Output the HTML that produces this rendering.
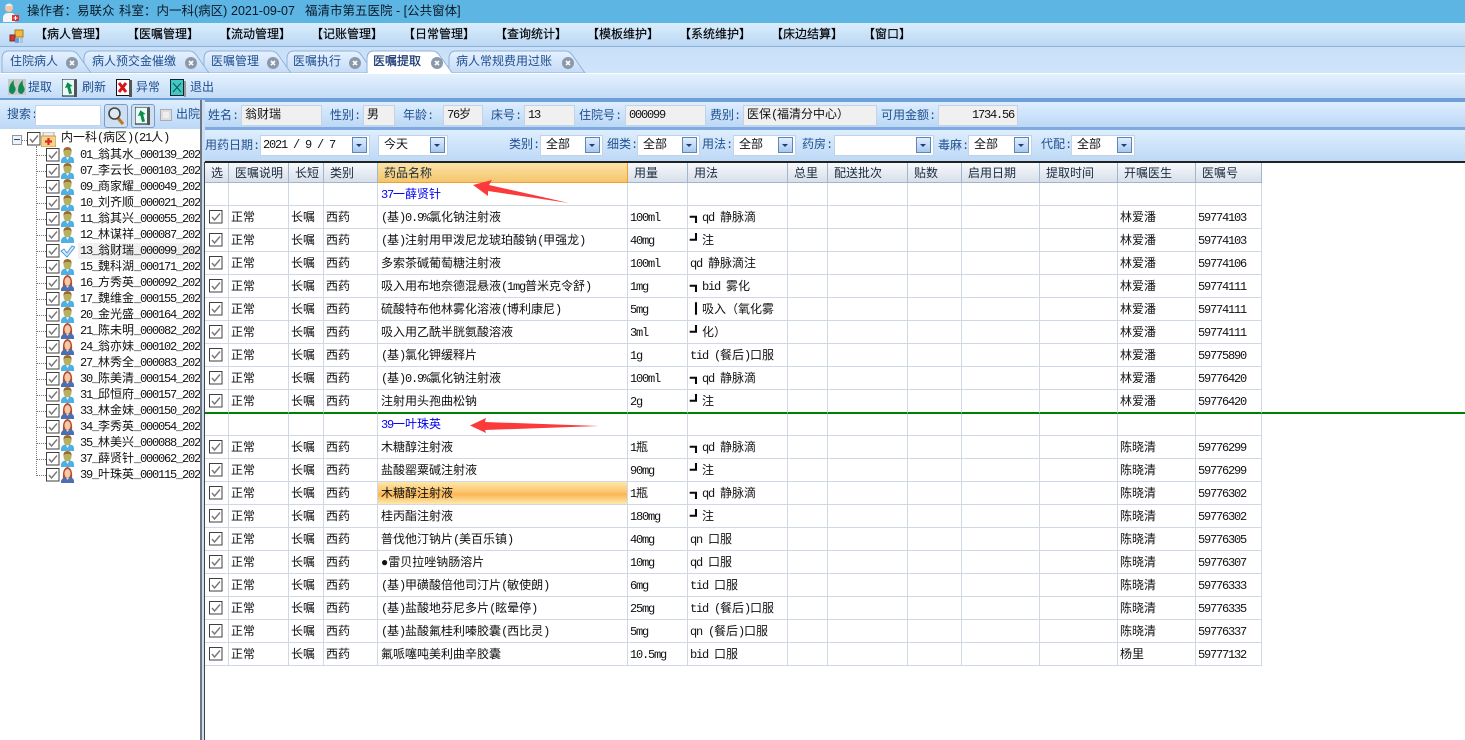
<!DOCTYPE html>
<html lang="zh"><head><meta charset="utf-8"><title>医嘱提取</title>
<style>
*{box-sizing:border-box}
html,body{margin:0;padding:0;width:1465px;height:740px;overflow:hidden;background:#fff}
body{position:relative;font:12px/14px "Liberation Mono","WenQuanYi Zen Hei","Noto Sans CJK SC",monospace;color:#111}
b{font-weight:normal;font-size:12px;letter-spacing:-1.2px;line-height:0}
em{font-style:normal;-webkit-text-stroke:.6px #000;line-height:0}
.a{position:absolute;white-space:nowrap}
svg{display:block}
#title{left:0;top:0;width:1465px;height:23px;background:#5db5e3}
#title span{position:absolute;top:0;font:12.5px/23px "Liberation Sans","WenQuanYi Zen Hei",sans-serif;color:#0a1a28;white-space:nowrap}
#menu{left:0;top:23px;width:1465px;height:24px;background:linear-gradient(#d9edfd,#bcd8f4);border-bottom:1px solid #8fb2da}
#menu span{position:absolute;top:5px;font-size:12px;line-height:14px;color:#000;-webkit-text-stroke:.15px #000}
#tabs{left:0;top:47px;width:1465px;height:26px;background:linear-gradient(#c8e0f8,#cfe4fa)}
#tbar{left:0;top:73px;width:1465px;height:27px;background:linear-gradient(#e4f1fe,#c3dcf7);border-top:1px solid #fff;border-bottom:2px solid #6d9fd6}
.tb{font-size:12px;color:#1f4e8f;top:81px}
.p{left:0;background:linear-gradient(#deeefe,#bcd8f6)}
.lab{color:#20508f;font-size:12px}
.inp{background:#f0f0f0;border:1px solid #c3d3e6;height:21px;font-size:12px;padding:2px 0 0 3px;color:#111}
.sel{background:#fff;border:1px solid #c3d3e6;height:21px;padding:2px 0 0 5px;color:#111}
.sel i{position:absolute;right:2px;top:1px;width:15px;height:16px;background:linear-gradient(#dfeeff,#a8c8ee);border:1px solid #5c86b9}
.sel i:after{content:"";position:absolute;left:3px;top:6px;border-style:solid;border-color:#1d3f78 transparent transparent;border-width:3px 3.5px 0;width:0;height:0}
table{position:absolute;left:205px;top:163px;border-collapse:separate;border-spacing:0;table-layout:fixed;width:1057px}
th,td{padding:0;border-right:1px solid #d0d7e5;border-bottom:1px solid #d0d7e5;overflow:hidden;white-space:nowrap;text-align:left;font-weight:normal;font-size:12px;vertical-align:top}
th{height:20px;background:linear-gradient(#f7f9fc,#d8dfea);color:#1a2a3c;padding:3px 0 0 6px;border-right:1px solid #9eb6ce;border-bottom:1px solid #9eb6ce;line-height:16px}
th.on{background:linear-gradient(#fbe3a6,#f5c56d);border-bottom:1px solid #ef9f32;border-right:1px solid #ef9f32}
td{height:23px;padding:2px 0 0 2px;line-height:20px}
td.n{padding-left:3px}
td.c{padding:4px 0 0 4px;line-height:0}
tr.g td{color:#0000f0}
tr.gl td{border-bottom:2px solid #008000;height:24px}
tr.g2 td{height:22px;padding-top:1px}
td.hl{background:linear-gradient(#fde7a9 0,#fcc56e 45%,#fbb554 55%,#fde9ae 100%)}
.t{position:absolute;left:80px;font-size:12px;line-height:14px;color:#111;width:120px;overflow:hidden;white-space:nowrap}
.tc{position:absolute;left:46px;width:14px;height:14px}
.ti{position:absolute;left:60px;width:15px;height:16px}
.h{position:absolute;left:36px;width:10px;border-top:1px dotted #777}
</style></head><body>
<svg width="0" height="0" style="position:absolute">
<symbol id="ck" viewBox="0 0 14 14"><rect x=".5" y=".5" width="12.500" height="12.500" fill="#fff" stroke="#3f3f3f"/><path d="M3 7l2.500 3L11 3.500" fill="none" stroke="#777" stroke-width="1.400"/></symbol>
<symbol id="m" viewBox="0 0 15 16"><path d="M1 16v-3q1-3 4-3.500h5q4 .5 4 3.500v3z" fill="#4fb0e6"/><path d="M6 10h3l-1.500 3z" fill="#fff"/><ellipse cx="7.500" cy="5.500" rx="4" ry="5" fill="#b8b05c"/><path d="M3.500 5Q3 0 7.500 0T11.500 5L10 3H5z" fill="#9a6a30"/></symbol>
<symbol id="f" viewBox="0 0 15 16"><path d="M3 12Q2 1 7.500 0 13 1 12 12z" fill="#b2502e"/><path d="M1 16v-2q1-3 4-3.500h5q4 .5 4 3.500v2z" fill="#4a6fb4"/><ellipse cx="7.500" cy="6.500" rx="3" ry="4.500" fill="#f6c9a4"/><path d="M6 11h3l-1.500 2z" fill="#f6c9a4"/></symbol>
<symbol id="v" viewBox="0 0 15 16"><path d="M1 8l3-2 3 4L12 3l3 1-8 10z" fill="#d6ecfa" stroke="#4f9ad8"/></symbol>
<symbol id="rf" viewBox="0 0 16 18"><rect x="0" y="0" width="14" height="17" fill="#e8fbf8" stroke="#111"/><rect x="12" y="1" width="3" height="17" fill="#555"/><path d="M3 8l4-5 4 5H8.500v7H5.500V8z" transform="rotate(-15 7 9)" fill="#0d8a4c"/></symbol>
</svg>

<div id="title" class="a"><span style="left:27px">操作者：易联众</span><span style="left:119px">科室：内一科(病区)</span><span style="left:231px">2021-09-07</span><span style="left:305px">福清市第五医院 - [公共窗体]</span></div>
<svg class="a" style="left:2px;top:2px" width="18" height="20" viewBox="0 0 18 20"><path d="M1 20v-5q1-4 5-4h3q4 0 4 4v5z" fill="#f5f5f5"/><circle cx="7" cy="6" r="4" fill="#f3c6a8"/><path d="M3 4q4-5 8 0z" fill="#e8eef4"/><rect x="10" y="13" width="7" height="6" fill="#d33"/><path d="M13.500 14v4M11.500 16h4" stroke="#fff"/></svg>

<div id="menu" class="a">
<svg style="position:absolute;left:9px;top:6px" width="15" height="15" viewBox="0 0 15 15"><rect x="6" y="1" width="8" height="7" fill="#f4b93c" stroke="#a77a1e"/><rect x="1" y="6" width="5" height="6" fill="#d8352e" stroke="#7e2a20"/><rect x="6" y="9" width="4" height="5" fill="#6a9ed8"/><rect x="11" y="9" width="3" height="5" fill="#a9c4e4"/></svg>
<span style="left:35px">【病人管理】</span><span style="left:127px">【医嘱管理】</span><span style="left:219px">【流动管理】</span><span style="left:311px">【记账管理】</span><span style="left:403px">【日常管理】</span><span style="left:495px">【查询统计】</span><span style="left:587px">【模板维护】</span><span style="left:679px">【系统维护】</span><span style="left:771px">【床边结算】</span><span style="left:863px">【窗口】</span>
</div>

<div id="tabs" class="a"></div>
<svg class="a" style="left:0;top:50px" width="600" height="24" viewBox="0 0 600 24">
<defs><linearGradient id="tg" x1="0" y1="0" x2="0" y2="1"><stop offset="0" stop-color="#e6f2fe"/><stop offset="1" stop-color="#c4dcf7"/></linearGradient></defs>
<path d="M449 23V9q0-8 7-8h109q5 0 8 5l12 17z" fill="url(#tg)" stroke="#8fb2da"/>
<path d="M287 23V9q0-8 7-8h60q5 0 8 5l12 17z" fill="url(#tg)" stroke="#8fb2da"/>
<path d="M204 23V9q0-8 7-8h60q5 0 8 5l12 17z" fill="url(#tg)" stroke="#8fb2da"/>
<path d="M84 23V9q0-8 7-8h98q5 0 8 5l12 17z" fill="url(#tg)" stroke="#8fb2da"/>
<path d="M2 23V9q0-8 7-8h62q5 0 8 5l12 17z" fill="url(#tg)" stroke="#8fb2da"/>
<path d="M367 24V9q0-8 7-8h58q5 0 8 5l13 18z" fill="#fff" stroke="#8fb2da"/>
<g fill="#8a98aa"><circle cx="72" cy="13" r="6"/><circle cx="191" cy="13" r="6"/><circle cx="273" cy="13" r="6"/><circle cx="355" cy="13" r="6"/><circle cx="437" cy="13" r="6"/><circle cx="568" cy="13" r="6"/></g>
<path d="M70 11l4 4m0-4l-4 4M189 11l4 4m0-4l-4 4M271 11l4 4m0-4l-4 4M353 11l4 4m0-4l-4 4M435 11l4 4m0-4l-4 4M566 11l4 4m0-4l-4 4" stroke="#fff" stroke-width="1.600"/>
</svg>
<div class="a" style="left:10px;top:55px;color:#1f4e8f">住院病人</div>
<div class="a" style="left:92px;top:55px;color:#1f4e8f">病人预交金催缴</div>
<div class="a" style="left:211px;top:55px;color:#1f4e8f">医嘱管理</div>
<div class="a" style="left:293px;top:55px;color:#1f4e8f">医嘱执行</div>
<div class="a" style="left:373px;top:55px;color:#1f3f78;-webkit-text-stroke:.3px #1f3f78">医嘱提取</div>
<div class="a" style="left:456px;top:55px;color:#1f4e8f">病人常规费用过账</div>

<div id="tbar" class="a"></div>
<svg class="a" style="left:8px;top:79px" width="18" height="16" viewBox="0 0 18 16"><rect width="18" height="16" fill="#c9c9c9"/><path d="M1 11q0-6 5-10-1 4 1 7t-2 7q-4 0-4-4zM10 11q0-6 5-10-1 4 1 7t-2 7q-4 0-4-4z" fill="#0f8a50"/></svg>
<div class="a tb" style="left:28px">提取</div>
<svg class="a" style="left:62px;top:79px" width="16" height="18"><use href="#rf"/></svg>
<div class="a tb" style="left:82px">刷新</div>
<svg class="a" style="left:116px;top:79px" width="16" height="18" viewBox="0 0 16 18"><rect x=".5" y=".5" width="13" height="16" fill="#fff" stroke="#111"/><rect x="13" y="1" width="3" height="17" fill="#555"/><path d="M3 4l7 9m0-9l-7 9" stroke="#d8141c" stroke-width="3"/></svg>
<div class="a tb" style="left:136px">异常</div>
<svg class="a" style="left:170px;top:79px" width="16" height="18" viewBox="0 0 16 18"><rect x=".5" y=".5" width="13" height="16" fill="#3fc9c0" stroke="#123"/><rect x="14" y="2" width="2" height="16" fill="#999"/><path d="M3 4l8 9m0-9l-8 9" stroke="#0d5560"/></svg>
<div class="a tb" style="left:190px">退出</div>

<!-- left panel -->
<div class="a p" style="top:100px;width:201px;height:29px"></div>
<div class="a lab" style="left:7px;top:108px">搜索<b>:</b></div>
<div class="a" style="left:35px;top:105px;width:66px;height:21px;background:#fff;border:1px solid #c3d3e6"></div>
<div class="a" style="left:104px;top:104px;width:24px;height:24px;border:1px solid #7c9cc4;border-radius:3px;background:#cfdff2"></div>
<svg class="a" style="left:107px;top:106px" width="18" height="19" viewBox="0 0 18 19"><path d="M10 11l6 7" stroke="#b57a25" stroke-width="3"/><circle cx="7.500" cy="7.500" r="5.500" fill="#dfe9f4" stroke="#444" stroke-width="1.600"/></svg>
<div class="a" style="left:131px;top:104px;width:24px;height:24px;border:1px solid #7c9cc4;border-radius:3px;background:#cfdff2"></div>
<svg class="a" style="left:135px;top:107px" width="16" height="18"><use href="#rf"/></svg>
<div class="a" style="left:160px;top:109px;width:12px;height:12px;background:#eee;border:1px solid #aab;box-shadow:inset 0 0 0 2px #ddd"></div>
<div class="a lab" style="left:176px;top:108px">出院</div>

<div class="a" style="left:200px;top:100px;width:2px;height:640px;background:#6f7680"></div>
<div class="a" style="left:202px;top:100px;width:3px;height:640px;background:#c9def6"></div>
<div class="a" style="left:204px;top:162px;width:1px;height:578px;background:#444"></div>

<!-- tree -->
<div class="a" style="left:36px;top:146px;height:330px;border-left:1px dotted #777"></div>
<div class="a" style="left:12px;top:135px;width:10px;height:10px;border:1px solid #8a98aa;background:#eef3f9"></div>
<div class="a" style="left:14px;top:139px;width:6px;height:1px;background:#345"></div>
<div class="h" style="left:22px;top:140px;width:5px"></div>
<svg class="a" style="left:27px;top:132px" width="14" height="14"><use href="#ck"/></svg>
<svg class="a" style="left:41px;top:132px" width="15" height="15" viewBox="0 0 15 15"><path d="M2 0h11v5H2z" fill="#eee" stroke="#aaa"/><rect x="0" y="4" width="15" height="11" rx="1" fill="#f6d48c" stroke="#c29a50"/><path d="M7.500 6v7M4 9.500h7" stroke="#e3261e" stroke-width="2.200"/></svg>
<div class="a" style="left:61px;top:131px">内一科<b>(</b>病区<b>)(21</b>人<b>)</b></div>
<div class="a" style="left:78px;top:243px;width:122px;height:16px;background:#f0f0f0"></div>

<div class="h" style="top:155px"></div><svg class="tc" style="top:148px"><use href="#ck"/></svg><svg class="ti" style="top:147px"><use href="#m"/></svg><div class="t" style="top:148px"><b>01_</b>翁其水<b>_000139_202</b></div>
<div class="h" style="top:171px"></div><svg class="tc" style="top:164px"><use href="#ck"/></svg><svg class="ti" style="top:163px"><use href="#m"/></svg><div class="t" style="top:164px"><b>07_</b>李云长<b>_000103_202</b></div>
<div class="h" style="top:187px"></div><svg class="tc" style="top:180px"><use href="#ck"/></svg><svg class="ti" style="top:179px"><use href="#m"/></svg><div class="t" style="top:180px"><b>09_</b>商家耀<b>_000049_202</b></div>
<div class="h" style="top:203px"></div><svg class="tc" style="top:196px"><use href="#ck"/></svg><svg class="ti" style="top:195px"><use href="#m"/></svg><div class="t" style="top:196px"><b>10_</b>刘齐顺<b>_000021_202</b></div>
<div class="h" style="top:219px"></div><svg class="tc" style="top:212px"><use href="#ck"/></svg><svg class="ti" style="top:211px"><use href="#m"/></svg><div class="t" style="top:212px"><b>11_</b>翁其兴<b>_000055_202</b></div>
<div class="h" style="top:235px"></div><svg class="tc" style="top:228px"><use href="#ck"/></svg><svg class="ti" style="top:227px"><use href="#m"/></svg><div class="t" style="top:228px"><b>12_</b>林谋祥<b>_000087_202</b></div>
<div class="h" style="top:251px"></div><svg class="tc" style="top:244px"><use href="#ck"/></svg><svg class="ti" style="top:243px"><use href="#v"/></svg><div class="t" style="top:244px"><b>13_</b>翁财瑞<b>_000099_202</b></div>
<div class="h" style="top:267px"></div><svg class="tc" style="top:260px"><use href="#ck"/></svg><svg class="ti" style="top:259px"><use href="#m"/></svg><div class="t" style="top:260px"><b>15_</b>魏科湖<b>_000171_202</b></div>
<div class="h" style="top:283px"></div><svg class="tc" style="top:276px"><use href="#ck"/></svg><svg class="ti" style="top:275px"><use href="#f"/></svg><div class="t" style="top:276px"><b>16_</b>方秀英<b>_000092_202</b></div>
<div class="h" style="top:299px"></div><svg class="tc" style="top:292px"><use href="#ck"/></svg><svg class="ti" style="top:291px"><use href="#m"/></svg><div class="t" style="top:292px"><b>17_</b>魏维金<b>_000155_202</b></div>
<div class="h" style="top:315px"></div><svg class="tc" style="top:308px"><use href="#ck"/></svg><svg class="ti" style="top:307px"><use href="#m"/></svg><div class="t" style="top:308px"><b>20_</b>金光盛<b>_000164_202</b></div>
<div class="h" style="top:331px"></div><svg class="tc" style="top:324px"><use href="#ck"/></svg><svg class="ti" style="top:323px"><use href="#f"/></svg><div class="t" style="top:324px"><b>21_</b>陈未明<b>_000082_202</b></div>
<div class="h" style="top:347px"></div><svg class="tc" style="top:340px"><use href="#ck"/></svg><svg class="ti" style="top:339px"><use href="#f"/></svg><div class="t" style="top:340px"><b>24_</b>翁亦妹<b>_000102_202</b></div>
<div class="h" style="top:363px"></div><svg class="tc" style="top:356px"><use href="#ck"/></svg><svg class="ti" style="top:355px"><use href="#m"/></svg><div class="t" style="top:356px"><b>27_</b>林秀全<b>_000083_202</b></div>
<div class="h" style="top:379px"></div><svg class="tc" style="top:372px"><use href="#ck"/></svg><svg class="ti" style="top:371px"><use href="#f"/></svg><div class="t" style="top:372px"><b>30_</b>陈美清<b>_000154_202</b></div>
<div class="h" style="top:395px"></div><svg class="tc" style="top:388px"><use href="#ck"/></svg><svg class="ti" style="top:387px"><use href="#m"/></svg><div class="t" style="top:388px"><b>31_</b>邱恒府<b>_000157_202</b></div>
<div class="h" style="top:411px"></div><svg class="tc" style="top:404px"><use href="#ck"/></svg><svg class="ti" style="top:403px"><use href="#f"/></svg><div class="t" style="top:404px"><b>33_</b>林金妹<b>_000150_202</b></div>
<div class="h" style="top:427px"></div><svg class="tc" style="top:420px"><use href="#ck"/></svg><svg class="ti" style="top:419px"><use href="#f"/></svg><div class="t" style="top:420px"><b>34_</b>李秀英<b>_000054_202</b></div>
<div class="h" style="top:443px"></div><svg class="tc" style="top:436px"><use href="#ck"/></svg><svg class="ti" style="top:435px"><use href="#m"/></svg><div class="t" style="top:436px"><b>35_</b>林美兴<b>_000088_202</b></div>
<div class="h" style="top:459px"></div><svg class="tc" style="top:452px"><use href="#ck"/></svg><svg class="ti" style="top:451px"><use href="#m"/></svg><div class="t" style="top:452px"><b>37_</b>薛贤针<b>_000062_202</b></div>
<div class="h" style="top:475px"></div><svg class="tc" style="top:468px"><use href="#ck"/></svg><svg class="ti" style="top:467px"><use href="#f"/></svg><div class="t" style="top:468px"><b>39_</b>叶珠英<b>_000115_202</b></div>

<!-- patient bar -->
<div class="a p" style="left:205px;top:100px;width:1260px;height:27px;border-top:2px solid #6d9fd6"></div>
<div class="a p" style="left:205px;top:127px;width:1260px;height:35px;border-top:3px solid #7eaadf"></div>
<div class="a" style="left:205px;top:161px;width:1260px;height:2px;background:#222"></div>

<div class="a lab" style="left:208px;top:109px">姓名<b>:</b></div><div class="a inp" style="left:241px;top:105px;width:81px">翁财瑞</div>
<div class="a lab" style="left:330px;top:109px">性别<b>:</b></div><div class="a inp" style="left:363px;top:105px;width:32px">男</div>
<div class="a lab" style="left:403px;top:109px">年龄<b>:</b></div><div class="a inp" style="left:443px;top:105px;width:40px"><b>76</b>岁</div>
<div class="a lab" style="left:491px;top:109px">床号<b>:</b></div><div class="a inp" style="left:524px;top:105px;width:51px"><b>13</b></div>
<div class="a lab" style="left:579px;top:109px">住院号<b>:</b></div><div class="a inp" style="left:625px;top:105px;width:81px"><b>000099</b></div>
<div class="a lab" style="left:710px;top:109px">费别<b>:</b></div><div class="a inp" style="left:743px;top:105px;width:134px">医保<b>(</b>福清分中心）</div>
<div class="a lab" style="left:881px;top:109px">可用金额<b>:</b></div><div class="a inp" style="left:938px;top:105px;width:80px;text-align:right;padding-right:3px"><b>1734.56</b></div>

<div class="a lab" style="left:205px;top:139px">用药日期<b>:</b></div><div class="a sel" style="left:260px;top:135px;width:110px;padding-left:2px"><b>2021 / 9 / 7</b><i></i></div>
<div class="a sel" style="left:378px;top:135px;width:70px">今天<i></i></div>
<div class="a lab" style="left:509px;top:138px">类别<b>:</b></div><div class="a sel" style="left:540px;top:135px;width:63px">全部<i></i></div>
<div class="a lab" style="left:607px;top:138px">细类<b>:</b></div><div class="a sel" style="left:637px;top:135px;width:63px">全部<i></i></div>
<div class="a lab" style="left:702px;top:138px">用法<b>:</b></div><div class="a sel" style="left:733px;top:135px;width:63px">全部<i></i></div>
<div class="a lab" style="left:802px;top:138px">药房<b>:</b></div><div class="a sel" style="left:834px;top:135px;width:100px"><i></i></div>
<div class="a lab" style="left:938px;top:139px">毒麻<b>:</b></div><div class="a sel" style="left:968px;top:135px;width:64px">全部<i></i></div>
<div class="a lab" style="left:1041px;top:138px">代配<b>:</b></div><div class="a sel" style="left:1071px;top:135px;width:64px">全部<i></i></div>

<table>
<colgroup><col style="width:24px"><col style="width:60px"><col style="width:35px"><col style="width:54px"><col style="width:250px"><col style="width:60px"><col style="width:100px"><col style="width:40px"><col style="width:80px"><col style="width:54px"><col style="width:78px"><col style="width:78px"><col style="width:78px"><col style="width:66px"></colgroup>
<tr><th>选</th><th>医嘱说明</th><th>长短</th><th>类别</th><th class="on">药品名称</th><th>用量</th><th>用法</th><th>总里</th><th>配送批次</th><th>贴数</th><th>启用日期</th><th>提取时间</th><th>开嘱医生</th><th>医嘱号</th></tr>
<tr class="g"><td></td><td></td><td></td><td></td><td class="n"><b>37</b>一薛贤针</td><td></td><td></td><td></td><td></td><td></td><td></td><td></td><td></td><td></td></tr>
<tr><td class="c"><svg width="14" height="14"><use href="#ck"/></svg></td><td>正常</td><td>长嘱</td><td>西药</td><td class="n"><b>(</b>基<b>)0.9%</b>氯化钠注射液</td><td><b>100ml</b></td><td><em>┓</em><b>qd </b>静脉滴</td><td></td><td></td><td></td><td></td><td></td><td>林爱潘</td><td><b>59774103</b></td></tr>
<tr><td class="c"><svg width="14" height="14"><use href="#ck"/></svg></td><td>正常</td><td>长嘱</td><td>西药</td><td class="n"><b>(</b>基<b>)</b>注射用甲泼尼龙琥珀酸钠<b>(</b>甲强龙<b>)</b></td><td><b>40mg</b></td><td><em>┛</em>注</td><td></td><td></td><td></td><td></td><td></td><td>林爱潘</td><td><b>59774103</b></td></tr>
<tr><td class="c"><svg width="14" height="14"><use href="#ck"/></svg></td><td>正常</td><td>长嘱</td><td>西药</td><td class="n">多索茶碱葡萄糖注射液</td><td><b>100ml</b></td><td><b>qd </b>静脉滴注</td><td></td><td></td><td></td><td></td><td></td><td>林爱潘</td><td><b>59774106</b></td></tr>
<tr><td class="c"><svg width="14" height="14"><use href="#ck"/></svg></td><td>正常</td><td>长嘱</td><td>西药</td><td class="n">吸入用布地奈德混悬液<b>(1mg</b>普米克令舒<b>)</b></td><td><b>1mg</b></td><td><em>┓</em><b>bid </b>雾化</td><td></td><td></td><td></td><td></td><td></td><td>林爱潘</td><td><b>59774111</b></td></tr>
<tr><td class="c"><svg width="14" height="14"><use href="#ck"/></svg></td><td>正常</td><td>长嘱</td><td>西药</td><td class="n">硫酸特布他林雾化溶液<b>(</b>博利康尼<b>)</b></td><td><b>5mg</b></td><td><em>┃</em>吸入（氧化雾</td><td></td><td></td><td></td><td></td><td></td><td>林爱潘</td><td><b>59774111</b></td></tr>
<tr><td class="c"><svg width="14" height="14"><use href="#ck"/></svg></td><td>正常</td><td>长嘱</td><td>西药</td><td class="n">吸入用乙酰半胱氨酸溶液</td><td><b>3ml</b></td><td><em>┛</em>化）</td><td></td><td></td><td></td><td></td><td></td><td>林爱潘</td><td><b>59774111</b></td></tr>
<tr><td class="c"><svg width="14" height="14"><use href="#ck"/></svg></td><td>正常</td><td>长嘱</td><td>西药</td><td class="n"><b>(</b>基<b>)</b>氯化钾缓释片</td><td><b>1g</b></td><td><b>tid (</b>餐后<b>)</b>口服</td><td></td><td></td><td></td><td></td><td></td><td>林爱潘</td><td><b>59775890</b></td></tr>
<tr><td class="c"><svg width="14" height="14"><use href="#ck"/></svg></td><td>正常</td><td>长嘱</td><td>西药</td><td class="n"><b>(</b>基<b>)0.9%</b>氯化钠注射液</td><td><b>100ml</b></td><td><em>┓</em><b>qd </b>静脉滴</td><td></td><td></td><td></td><td></td><td></td><td>林爱潘</td><td><b>59776420</b></td></tr>
<tr class="gl"><td class="c"><svg width="14" height="14"><use href="#ck"/></svg></td><td>正常</td><td>长嘱</td><td>西药</td><td class="n">注射用头孢曲松钠</td><td><b>2g</b></td><td><em>┛</em>注</td><td></td><td></td><td></td><td></td><td></td><td>林爱潘</td><td><b>59776420</b></td></tr>
<tr class="g g2"><td></td><td></td><td></td><td></td><td class="n"><b>39</b>一叶珠英</td><td></td><td></td><td></td><td></td><td></td><td></td><td></td><td></td><td></td></tr>
<tr><td class="c"><svg width="14" height="14"><use href="#ck"/></svg></td><td>正常</td><td>长嘱</td><td>西药</td><td class="n">木糖醇注射液</td><td><b>1</b>瓶</td><td><em>┓</em><b>qd </b>静脉滴</td><td></td><td></td><td></td><td></td><td></td><td>陈晓清</td><td><b>59776299</b></td></tr>
<tr><td class="c"><svg width="14" height="14"><use href="#ck"/></svg></td><td>正常</td><td>长嘱</td><td>西药</td><td class="n">盐酸罂粟碱注射液</td><td><b>90mg</b></td><td><em>┛</em>注</td><td></td><td></td><td></td><td></td><td></td><td>陈晓清</td><td><b>59776299</b></td></tr>
<tr><td class="c"><svg width="14" height="14"><use href="#ck"/></svg></td><td>正常</td><td>长嘱</td><td>西药</td><td class="n hl">木糖醇注射液</td><td><b>1</b>瓶</td><td><em>┓</em><b>qd </b>静脉滴</td><td></td><td></td><td></td><td></td><td></td><td>陈晓清</td><td><b>59776302</b></td></tr>
<tr><td class="c"><svg width="14" height="14"><use href="#ck"/></svg></td><td>正常</td><td>长嘱</td><td>西药</td><td class="n">桂丙酯注射液</td><td><b>180mg</b></td><td><em>┛</em>注</td><td></td><td></td><td></td><td></td><td></td><td>陈晓清</td><td><b>59776302</b></td></tr>
<tr><td class="c"><svg width="14" height="14"><use href="#ck"/></svg></td><td>正常</td><td>长嘱</td><td>西药</td><td class="n">普伐他汀钠片<b>(</b>美百乐镇<b>)</b></td><td><b>40mg</b></td><td><b>qn </b>口服</td><td></td><td></td><td></td><td></td><td></td><td>陈晓清</td><td><b>59776305</b></td></tr>
<tr><td class="c"><svg width="14" height="14"><use href="#ck"/></svg></td><td>正常</td><td>长嘱</td><td>西药</td><td class="n">●雷贝拉唑钠肠溶片</td><td><b>10mg</b></td><td><b>qd </b>口服</td><td></td><td></td><td></td><td></td><td></td><td>陈晓清</td><td><b>59776307</b></td></tr>
<tr><td class="c"><svg width="14" height="14"><use href="#ck"/></svg></td><td>正常</td><td>长嘱</td><td>西药</td><td class="n"><b>(</b>基<b>)</b>甲磺酸倍他司汀片<b>(</b>敏使朗<b>)</b></td><td><b>6mg</b></td><td><b>tid </b>口服</td><td></td><td></td><td></td><td></td><td></td><td>陈晓清</td><td><b>59776333</b></td></tr>
<tr><td class="c"><svg width="14" height="14"><use href="#ck"/></svg></td><td>正常</td><td>长嘱</td><td>西药</td><td class="n"><b>(</b>基<b>)</b>盐酸地芬尼多片<b>(</b>眩晕停<b>)</b></td><td><b>25mg</b></td><td><b>tid (</b>餐后<b>)</b>口服</td><td></td><td></td><td></td><td></td><td></td><td>陈晓清</td><td><b>59776335</b></td></tr>
<tr><td class="c"><svg width="14" height="14"><use href="#ck"/></svg></td><td>正常</td><td>长嘱</td><td>西药</td><td class="n"><b>(</b>基<b>)</b>盐酸氟桂利嗪胶囊<b>(</b>西比灵<b>)</b></td><td><b>5mg</b></td><td><b>qn (</b>餐后<b>)</b>口服</td><td></td><td></td><td></td><td></td><td></td><td>陈晓清</td><td><b>59776337</b></td></tr>
<tr><td class="c"><svg width="14" height="14"><use href="#ck"/></svg></td><td>正常</td><td>长嘱</td><td>西药</td><td class="n">氟哌噻吨美利曲辛胶囊</td><td><b>10.5mg</b></td><td><b>bid </b>口服</td><td></td><td></td><td></td><td></td><td></td><td>杨里</td><td><b>59777132</b></td></tr>
</table>
<div class="a" style="left:1262px;top:412px;width:203px;height:2px;background:#008000"></div>

<svg class="a" style="left:465px;top:175px" width="140" height="260" viewBox="0 0 140 260">
<path d="M8 10L27 5 24 10 104 28 23 16 23 21z" fill="#fb3a3c"/>
<path d="M5 250.500L21 243 20 247 134 251 20 255 21 258z" fill="#fb3a3c"/>
</svg>
</body></html>
